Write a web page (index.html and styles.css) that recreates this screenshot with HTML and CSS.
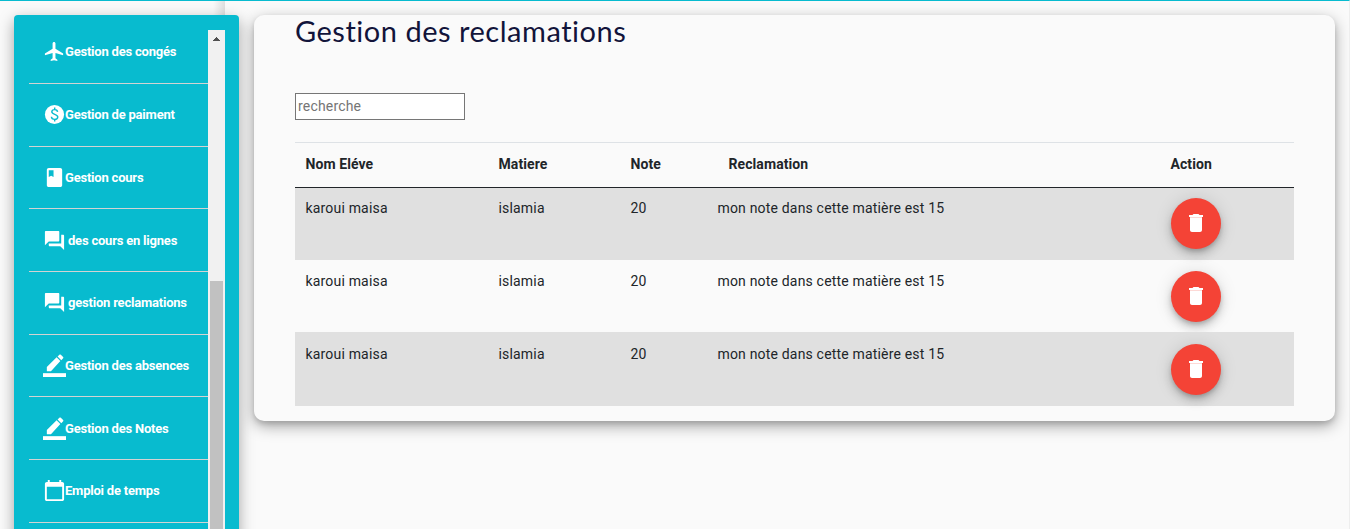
FILE: index.html
```html
<!DOCTYPE html>
<html lang="fr">
<head>
<meta charset="utf-8">
<title>Gestion des reclamations</title>
<link rel="stylesheet" href="styles.css">
</head>
<body>
<svg class="defs" aria-hidden="true">
  <symbol id="plane" viewBox="0 0 24 24"><path d="M21 16v-2l-8-5V3.500c0-.83-.67-1.500-1.500-1.500S10 2.670 10 3.500V9l-8 5v2l8-2.500V19l-2 1.500V22l3.500-1 3.500 1v-1.500L13 19v-5.500z"/></symbol>
  <symbol id="money" viewBox="0 0 24 24"><circle cx="12" cy="12" r="10"/><path class="sign" d="M15.200 9.300C15.100 7.700 13.900 6.900 12.200 6.900c-1.800 0-3 .9-3 2.300 0 3.300 6.200 1.900 6.200 5.400 0 1.500-1.300 2.500-3.200 2.500s-3.300-1-3.400-2.700M12.200 4.800V7M12.200 17v2.300"/></symbol>
  <symbol id="book" viewBox="0 0 24 24"><path fill-rule="evenodd" d="M18 2H6c-1.100 0-2 .9-2 2v16c0 1.100.9 2 2 2h12c1.100 0 2-.9 2-2V4c0-1.100-.9-2-2-2zM6 4.500h5v7l-2.500-1.300L6 11.500z"/></symbol>
  <symbol id="forum" viewBox="0 0 24 24"><path d="M21 6h-2v9H6v2c0 .55.45 1 1 1h11l4 4V7c0-.55-.45-1-1-1zm-4 6V3c0-.55-.45-1-1-1H3c-.55 0-1 .45-1 1v14l4-4h10c.55 0 1-.45 1-1z"/></symbol>
  <symbol id="pen" viewBox="0 0 24 24"><path d="M18.100 7.400 14.200 3.500 4 13.600V18h4.300zM21 4.500c.4-.4.4-1.100 0-1.500L18.600.7c-.4-.4-1.100-.4-1.500 0L15.200 2.600l3.900 3.900z"/><path d="M0 20h24v4H0z"/></symbol>
  <symbol id="calendar" viewBox="0 0 24 24"><path d="M20 3h-1V1h-2v2H7V1H5v2H4c-1.100 0-2 .9-2 2v16c0 1.100.9 2 2 2h16c1.100 0 2-.9 2-2V5c0-1.100-.9-2-2-2zm0 18H4V8h16v13z"/></symbol>
  <symbol id="trash" viewBox="0 0 24 24"><path d="M6 19c0 1.100.9 2 2 2h8c1.100 0 2-.9 2-2V7H6v12z"/><path opacity=".8" d="M6 5.800h12V7.200H6z"/><path d="M19 4h-3.500l-1-1h-5l-1 1H5v2h14V4z"/></symbol>
</svg>
<div class="page">
  <aside class="drawer">
    <nav class="sidebar">
      <div class="menu">
        <a class="item"><svg class="icon"><use href="#plane"/></svg>Gestion des congés</a>
        <a class="item"><svg class="icon"><use href="#money"/></svg>Gestion de paiment</a>
        <a class="item"><svg class="icon"><use href="#book"/></svg>Gestion cours</a>
        <a class="item spaced"><svg class="icon"><use href="#forum"/></svg>des cours en lignes</a>
        <a class="item spaced"><svg class="icon"><use href="#forum"/></svg>gestion reclamations</a>
        <a class="item"><svg class="icon pen"><use href="#pen"/></svg>Gestion des absences</a>
        <a class="item"><svg class="icon pen"><use href="#pen"/></svg>Gestion des Notes</a>
        <a class="item"><svg class="icon"><use href="#calendar"/></svg>Emploi de temps</a>
      </div>
      <div class="scrollbar"><svg class="arrow" viewBox="0 0 7 4"><path d="M3 0h1v1h1v1h1v1h1v1H0V3h1V2h1V1h1z"/></svg><div class="thumb"></div></div>
    </nav>
  </aside>
  <main class="content">
    <section class="card">
      <h1 class="title">Gestion des reclamations</h1>
      <input class="search" type="text" placeholder="recherche">
      <table class="table">
        <colgroup><col class="c-name"><col class="c-subject"><col class="c-note"><col class="c-text"><col></colgroup>
        <thead><tr><th>Nom Eléve</th><th>Matiere</th><th>Note</th><th class="indent">Reclamation</th><th>Action</th></tr></thead>
        <tbody>
          <tr><td>karoui maisa</td><td>islamia</td><td>20</td><td>mon note dans cette matière est 15</td><td><button class="delete" aria-label="Supprimer"><svg class="bin"><use href="#trash"/></svg></button></td></tr>
          <tr><td>karoui maisa</td><td>islamia</td><td>20</td><td>mon note dans cette matière est 15</td><td><button class="delete" aria-label="Supprimer"><svg class="bin"><use href="#trash"/></svg></button></td></tr>
          <tr><td>karoui maisa</td><td>islamia</td><td>20</td><td>mon note dans cette matière est 15</td><td><button class="delete" aria-label="Supprimer"><svg class="bin"><use href="#trash"/></svg></button></td></tr>
        </tbody>
      </table>
    </section>
  </main>
</div>
</body>
</html>
```
FILE: styles.css
```css
* { box-sizing: border-box; }
body { margin: 0; height: 529px; overflow: hidden; background: #fafafa; font-family: Roboto, sans-serif; color: #212529; }
.defs { display: none; }
.page { display: flex; height: 529px; border-top: 1px solid #08bbcf; border-right: 1px solid #eee; overflow: hidden; }
.drawer { width: 225px; flex: none; padding: 14px 0 0 14px; background: linear-gradient(to left, rgba(0,0,0,.11), transparent 12px) no-repeat; }
.sidebar { position: relative; z-index: 1; display: flex; width: 225px; height: 540px; padding: 15px 14px 0 15px; background: #08bbcf; border-radius: 4px; box-shadow: 0 5px 15px rgba(0,0,0,.35); }
.menu { flex: 1; }
.item { display: flex; align-items: center; height: 62.700px; padding: 0 0 0 14px; border-bottom: 1px solid #d3d3d3; color: #fff; font-size: 13px; font-weight: 700; letter-spacing: -.21px; white-space: nowrap; }
.item:first-child { height: 54px; padding-bottom: 10px; }
.icon { width: 23px; height: 23px; margin-right: -1px; fill: #fff; flex: none; }
.sign { fill: none; stroke: #08bbcf; stroke-width: 1.500px; }
.spaced .icon { margin-right: 2px; }
.icon.pen { margin: 0 -1px 0 0; }
.scrollbar { width: 17px; background: #f1f1f1; padding: 7px 2px 0; text-align: center; }
.arrow { display: block; width: 7px; height: 4px; margin: 0 auto; fill: #505050; }
.thumb { height: 300px; margin-top: 240px; background: #c1c1c1; }
.content { flex: 1; padding: 14px 14px 0 29px; }
.card { height: 406px; padding: 0 41px; background: #fafafa; border-radius: 10px; box-shadow: 0 5px 15px rgba(0,0,0,.35), 0 3px 5px rgba(0,0,0,.12); }
.title { margin: 0; height: 78px; font: 400 29px/31px Lato, sans-serif; letter-spacing: .52px; color: #12143a; white-space: nowrap; }
.search { display: block; width: 170px; height: 27px; padding: 0 2px 2px; border: 1px solid #767676; background: #fff; font: 14px Roboto, sans-serif; letter-spacing: .18px; }
.search::placeholder { color: #757575; }
.table { width: 999px; margin-top: 22px; table-layout: fixed; border-collapse: separate; border-spacing: 0; font-size: 14px; line-height: 21px; letter-spacing: .18px; }
.c-name { width: 193px; }
.c-subject { width: 132px; }
.c-note { width: 87px; }
.c-text { width: 453px; }
.table th { height: 46px; padding: 0 10.500px 1px; border-top: 1px solid #dee2e6; border-bottom: 1px solid #212529; text-align: left; font-weight: 700; letter-spacing: .08px; }
.table th.indent { padding-left: 21.500px; }
.table td { height: 72px; padding: 10px 10.500px 0; vertical-align: top; }
.table td:last-child { padding-left: 11px; }
.table tr:nth-child(2) td { padding-top: 11px; }
.table tr:nth-child(3) td { padding-top: 12px; height: 74px; }
.table tbody tr:nth-child(odd) { background: #e0e0e0; }
.delete { display: flex; align-items: center; justify-content: center; width: 50px; height: 51px; padding: 0 0 1px; border: 0; border-radius: 50%; background: #f44336; box-shadow: 0 3px 5px -1px rgba(0,0,0,.2), 0 6px 10px rgba(0,0,0,.14), 0 1px 18px rgba(0,0,0,.12); }
.bin { width: 24px; height: 24px; fill: #fff; }
```
